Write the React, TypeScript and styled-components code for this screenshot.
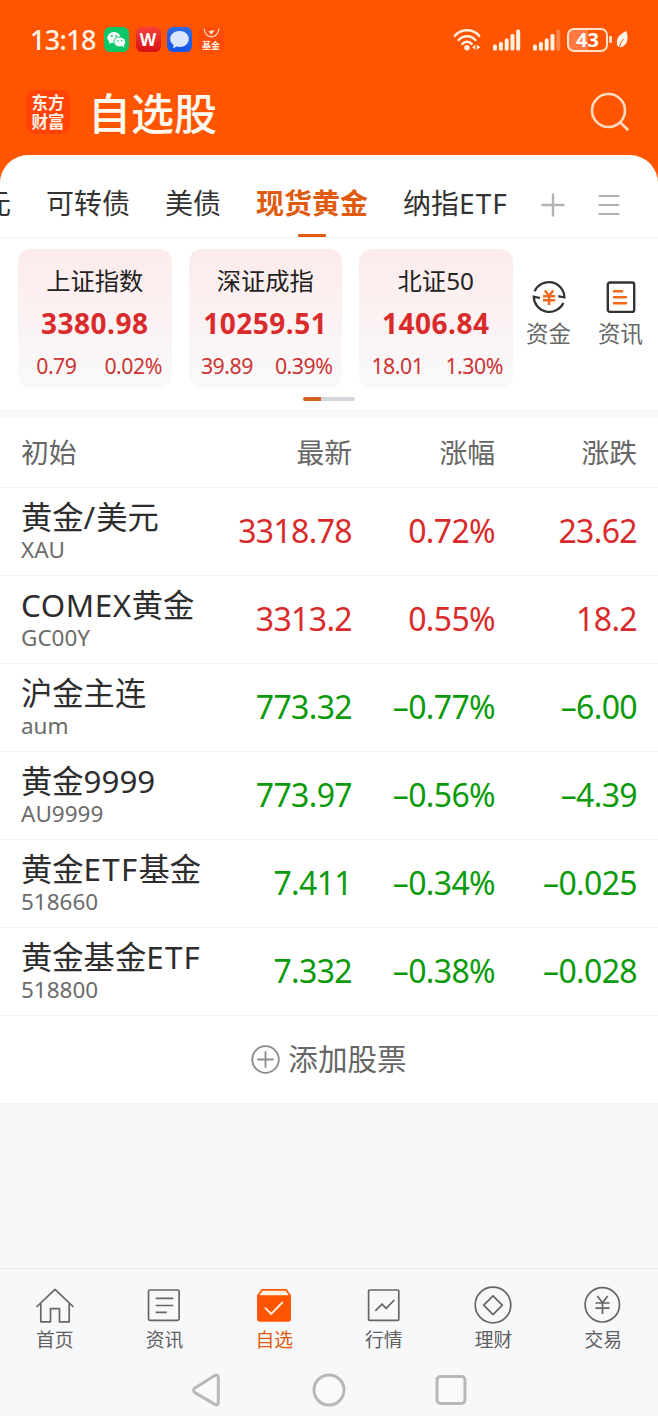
import React from 'react';
import styled, { createGlobalStyle } from 'styled-components';

const ORANGE = '#ff5500';
const ACCENT = '#e05a10';
const RED = '#d92b2b';
const GREEN = '#0a9a0a';

const GlobalStyle = createGlobalStyle`
  * { box-sizing: border-box; }
  body {
    margin: 0;
    background: #f7f8fa;
    font-family: "Noto Sans", "Noto Sans CJK SC", sans-serif;
  }
  svg { display: block; flex: none; }
`;

const Page = styled.div`
  display: flex;
  flex-direction: column;
  width: 658px;
  height: 1416px;
  overflow: hidden;
  background: ${ORANGE};
`;

/* ---------- status bar ---------- */
const StatusBar = styled.div`
  display: flex;
  align-items: center;
  height: 79px;
  flex: none;
  padding: 0 29px 0 30px;
  color: #fff6ea;
`;
const Clock = styled.div`
  width: 74px;
  font-size: 27px;
  font-weight: 500;
  line-height: 32px;
  letter-spacing: -0.7px;
`;
const AppBadges = styled.div`
  display: flex;
  gap: 6.5px;
`;
const AppBadge = styled.div<{ $bg: string }>`
  display: flex;
  flex-direction: column;
  align-items: center;
  justify-content: center;
  width: 25px;
  height: 25px;
  border-radius: 6px;
  overflow: hidden;
  background: ${(p) => p.$bg};
`;
const BadgeLetter = styled.span`
  font-size: 17px;
  line-height: 25px;
  font-weight: 700;
  color: #fff;
`;
const FundLabel = styled.span`
  font: 700 9px/11px "Noto Sans CJK SC", sans-serif;
  color: #fff0e0;
  white-space: nowrap;
`;
const StatusIcons = styled.div`
  display: flex;
  align-items: center;
  margin-left: auto;
`;
const Signal = styled.svg`
  margin-left: 11.5px;
`;
const Battery = styled.div`
  width: 41px;
  height: 24px;
  margin-left: 6.5px;
  border: 2px solid #ffe2cc;
  border-radius: 7px;
  background: linear-gradient(90deg, #ff7a42 0 50%, ${ORANGE} 50%);
  color: #fff;
  font-weight: 700;
  font-size: 20px;
  line-height: 20px;
  text-align: center;
`;
const BatteryNub = styled.div`
  width: 3px;
  height: 7px;
  margin: 0 4px 0 1px;
  border-radius: 1px;
  background: #ffd9bd;
`;

/* ---------- header ---------- */
const Header = styled.header`
  display: flex;
  align-items: center;
  height: 76px;
  flex: none;
  padding: 0 27px 10px 26px;
`;
const Logo = styled.div`
  width: 44px;
  height: 44px;
  padding-top: 3px;
  border-radius: 9px;
  background: #ff4306;
  color: #fff3e6;
  font: 700 16.5px/18.5px "Noto Sans CJK SC", sans-serif;
  text-align: center;
`;
const Title = styled.h1`
  flex: 1;
  margin: 4px 0 0 18px;
  color: #fffaf0;
  font-size: 43px;
  line-height: 50px;
  font-weight: 500;
`;

/* ---------- panel & tabs ---------- */
const Panel = styled.main`
  display: flex;
  flex-direction: column;
  flex: 1;
  overflow: hidden;
  border-radius: 28px 28px 0 0;
  background: #fff;
`;
const TabBar = styled.nav`
  display: flex;
  height: 83px;
  flex: none;
  border-bottom: 1px solid #f1f1f1;
`;
const Tabs = styled.div`
  display: flex;
  gap: 35px;
  width: 541px;
  margin-left: -17px;
  padding-right: 10px;
`;
const Tab = styled.div<{ $active?: boolean }>`
  display: flex;
  flex: none;
  flex-direction: column;
  align-items: center;
  height: 83px;
  padding-top: 31px;
  font-size: 28px;
  line-height: 34px;
  white-space: nowrap;
  font-weight: ${(p) => (p.$active ? 700 : 400)};
  color: ${(p) => (p.$active ? ACCENT : '#333')};

  &::after {
    content: "";
    display: ${(p) => (p.$active ? 'block' : 'none')};
    width: 28px;
    height: 3px;
    margin-top: 14px;
    border-radius: 1px;
    background: ${ACCENT};
  }
`;
const TabActions = styled.div`
  display: flex;
  align-items: center;
  gap: 33px;
  padding: 17px 0 0 17px;
`;

/* ---------- index cards ---------- */
const Indices = styled.section`
  display: flex;
  height: 150px;
  flex: none;
  padding: 11px 0 0 18px;
`;
const Cards = styled.div`
  display: grid;
  grid-template-columns: repeat(3, 153.5px);
  column-gap: 17px;
`;
const Card = styled.div`
  height: 139px;
  padding-top: 16px;
  border-radius: 13px;
  background: linear-gradient(#fdebeb, #f9f9fa);
  text-align: center;
`;
const CardName = styled.div`
  color: #222;
  font-size: 24.3px;
  line-height: 32px;
`;
const CardValue = styled.div`
  margin-top: 10px;
  color: ${RED};
  font-size: 28px;
  font-weight: 700;
  line-height: 32px;
  letter-spacing: 0.5px;
`;
const CardChange = styled.div`
  display: grid;
  grid-template-columns: 1fr 1fr;
  margin-top: 12px;
  color: #cc3434;
  font-size: 21.3px;
  line-height: 29px;
  letter-spacing: -0.5px;
`;
const Shortcut = styled.div`
  display: flex;
  flex-direction: column;
  align-items: center;
  width: 72px;
  padding-top: 30px;
  color: #666;
  font-size: 22.4px;
  line-height: 28px;
`;
const ShortcutLabel = styled.div`
  margin-top: 5px;
`;
const Pager = styled.div`
  width: 52px;
  height: 4px;
  flex: none;
  margin: 9px 0 8px 303px;
  border-radius: 2px;
  background: linear-gradient(90deg, #d2611f 0 18px, #d3d6da 18px);
`;
const Band = styled.div`
  height: 9px;
  flex: none;
  background: #f7f8fa;
`;

/* ---------- quotes ---------- */
const Row = styled.div<{ $head?: boolean }>`
  display: grid;
  grid-template-columns: 199px 132px 143px 142px;
  align-items: center;
  height: ${(p) => (p.$head ? 70 : 88)}px;
  flex: none;
  padding: 0 21px;
  border-bottom: 1px solid #f3f3f3;
`;
const HeadCell = styled.div<{ $left?: boolean }>`
  margin-bottom: 2px;
  color: #666;
  font-size: 27.8px;
  line-height: 36px;
  text-align: ${(p) => (p.$left ? 'left' : 'right')};
`;
const Name = styled.div`
  color: #2d2d2d;
  font-size: 31.3px;
  line-height: 36px;
  white-space: nowrap;
`;
const Latin = styled.span<{ $track?: number }>`
  letter-spacing: ${(p) => p.$track ?? 0}px;
`;
const Code = styled.div`
  color: #6b6b6b;
  font-size: 22.5px;
  line-height: 30px;
`;
const Num = styled.div<{ $up: boolean }>`
  margin-bottom: 1px;
  color: ${(p) => (p.$up ? RED : GREEN)};
  font-size: 32px;
  line-height: 40px;
  letter-spacing: -0.65px;
  text-align: right;
  white-space: nowrap;
`;
const AddRow = styled.div`
  display: flex;
  align-items: center;
  justify-content: center;
  gap: 8px;
  height: 88px;
  flex: none;
  border-bottom: 1px solid #f0f0f2;
  color: #666;
  font-size: 29.6px;
  line-height: 36px;
`;
const AddLabel = styled.span`
  margin-bottom: 2px;
`;
const Filler = styled.div`
  flex: 1;
  background: #f7f8fa;
`;

/* ---------- bottom bars ---------- */
const BottomNav = styled.nav`
  display: grid;
  grid-template-columns: repeat(6, 1fr);
  height: 96px;
  flex: none;
  border-top: 1px solid #ebecee;
  background: #f7f8fa;
`;
const NavItem = styled.div<{ $active?: boolean }>`
  display: flex;
  flex-direction: column;
  align-items: center;
  padding-top: 16px;
  color: ${(p) => (p.$active ? ACCENT : '#606060')};
  font-size: 18.8px;
  line-height: 24px;
`;
const NavLabel = styled.div`
  margin-top: 3px;
`;
const SystemNav = styled.div`
  display: flex;
  align-items: center;
  justify-content: space-between;
  height: 52px;
  flex: none;
  padding: 0 189px 0 188px;
  background: #f7f8fa;
`;

/* ---------- data ---------- */
const cards = [
  ['上证指数', '3380.98', '0.79', '0.02%'],
  ['深证成指', '10259.51', '39.89', '0.39%'],
  ['北证50', '1406.84', '18.01', '1.30%'],
];

const quotes: { name: React.ReactNode; code: string; values: string[]; up: boolean }[] = [
  { name: <>黄金<Latin $track={1}>/</Latin>美元</>, code: 'XAU', values: ['3318.78', '0.72%', '23.62'], up: true },
  { name: <><Latin $track={0.6}>COMEX</Latin>黄金</>, code: 'GC00Y', values: ['3313.2', '0.55%', '18.2'], up: true },
  { name: '沪金主连', code: 'aum', values: ['773.32', '–0.77%', '–6.00'], up: false },
  { name: '黄金9999', code: 'AU9999', values: ['773.97', '–0.56%', '–4.39'], up: false },
  { name: <>黄金<Latin $track={1.3}>ETF</Latin>基金</>, code: '518660', values: ['7.411', '–0.34%', '–0.025'], up: false },
  { name: <>黄金基金<Latin $track={1.3}>ETF</Latin></>, code: '518800', values: ['7.332', '–0.38%', '–0.028'], up: false },
];

/* ---------- icons ---------- */
const WeChatIcon = () => (
  <svg width="25" height="25" viewBox="0 0 25 25">
    <ellipse cx="10" cy="10.6" rx="6.6" ry="5.6" fill="#fff" />
    <path d="M5.6 14l-.7 3 3.2-1.6z" fill="#fff" />
    <ellipse cx="15.8" cy="15" rx="6" ry="5" fill="#fff" stroke="#0bc765" strokeWidth="1" />
    <path d="M18 19l2.3 1.6-.4-2.8z" fill="#fff" />
    <circle cx="7.8" cy="9" r="1" fill="#0bc765" />
    <circle cx="12.2" cy="9" r="1" fill="#0bc765" />
    <circle cx="14" cy="13.7" r=".8" fill="#0bc765" />
    <circle cx="17.8" cy="13.7" r=".8" fill="#0bc765" />
  </svg>
);
const ChatIcon = () => (
  <svg width="25" height="25" viewBox="0 0 25 25">
    <path d="M12.5 4c5.200 0 9.300 3.400 9.300 8s-4.100 8-9.300 8c-1 0-2-.1-2.900-.4-1 .8-2.300 1.300-4 1.300.8-.9 1.100-1.800 1-2.900C4.500 16.500 3.200 14.400 3.200 12c0-4.600 4.100-8 9.300-8z" fill="#dbe7ff" />
  </svg>
);
const FundIcon = () => (
  <svg width="25" height="12" viewBox="0 0 25 12" fill="none" stroke="#ffe3cf">
    <path d="M5 .5c.8 5.400 4 8.300 7.500 8.300S19.200 5.900 20 .5" strokeWidth="1.200" />
    <path d="M9.500 3.200l6-1.200-3 5z" fill="#ffe3cf" stroke="none" />
  </svg>
);
const WifiIcon = () => (
  <svg width="29" height="24" viewBox="0 0 29 24" fill="none" stroke="#fff0e0" strokeWidth="2.500" strokeLinecap="round">
    <path d="M1.800 7.800C8.500.5 19.500.5 26.200 7.800" />
    <path d="M5.600 12c4.800-5 12-5 16.800 0" />
    <path d="M9.300 15.900c2.900-2.600 6.500-2.600 9.400 0" />
    <circle cx="14" cy="19.800" r="2.700" fill="#fff0e0" stroke="none" />
    <path d="M22.300 16.800v5l-3.200-2.500zM23.700 16.800v5l3.700-2.500z" fill="#fff0e0" stroke="none" />
  </svg>
);
const SignalIcon = ({ weak }: { weak?: boolean }) => (
  <Signal width="28" height="23" viewBox="0 0 28 23" fill="#fff0e0">
    <rect x="0" y="16.500" width="4" height="6" rx="1.500" />
    <rect x="5.900" y="14" width="4" height="8.500" rx="1.500" />
    <rect x="11.700" y="10.500" width="4" height="12" rx="1.500" />
    <rect x="17.500" y="6" width="4" height="16.500" rx="1.500" />
    <rect x="23.200" y="1.500" width="4" height="21" rx="1.500" opacity={weak ? 0.3 : 1} />
  </Signal>
);
const LeafIcon = () => (
  <svg width="13" height="19" viewBox="0 0 13 19">
    <path d="M10.200 1C5 3.500 1 6.500 .8 12c0 2.500 .6 4 2 5.200C9 18.500 14.200 10 10.200 1z" fill="#fff6ea" />
    <path d="M3 18C4 14 5.500 11.500 7.500 9" stroke={ORANGE} strokeWidth="1" fill="none" />
  </svg>
);
const SearchIcon = () => (
  <svg width="42" height="42" viewBox="0 0 42 42" fill="none" stroke="#ffdcc0" strokeWidth="2.600">
    <circle cx="19.500" cy="19.500" r="16.500" />
    <path d="M31 31.200l8.300 8" />
  </svg>
);
const PlusIcon = () => (
  <svg width="24" height="24" viewBox="0 0 24 24" stroke="#b3b3b3" strokeWidth="2.400" strokeLinecap="round">
    <path d="M12 1.500v21M1.500 12h21" />
  </svg>
);
const MenuIcon = () => (
  <svg width="22" height="24" viewBox="0 0 22 24" stroke="#b0b0b0" strokeWidth="2.200" strokeLinecap="round">
    <path d="M1.500 3h19M1.500 12h19M1.500 21h19" />
  </svg>
);
const FundsIcon = () => (
  <svg width="36" height="36" viewBox="0 0 36 36" fill="none" stroke="#333" strokeWidth="2.200">
    <path d="M3.600 12.200A15.600 15.600 0 0 1 33.400 18.500L27.300 17.200" />
    <path d="M32.400 24A15.600 15.600 0 0 1 2.700 17.700L9 19" />
    <path d="M13.800 11.500l4.200 5.200 4.200-5.200M12 17.200h12.200M12 21.200h12.200M18.100 17v9" stroke="#f26a1b" strokeWidth="2.500" />
  </svg>
);
const NewsIcon = () => (
  <svg width="36" height="36" viewBox="0 0 36 36" fill="none" stroke="#333" strokeWidth="2.400">
    <rect x="4.800" y="3.500" width="26.400" height="29.400" rx="2.200" />
    <path d="M11 12.300h8M11 18.200h12M11 24.300h12" stroke="#f26a1b" strokeWidth="2.500" strokeLinecap="round" />
  </svg>
);
const AddIcon = () => (
  <svg width="29" height="29" viewBox="0 0 29 29" fill="none" stroke="#8c8c8c" strokeWidth="1.800">
    <circle cx="14.500" cy="14.500" r="13.300" />
    <path d="M14.500 6.300v16.400M6.300 14.500h16.400" />
  </svg>
);

const NavSvg = ({ children }: { children: React.ReactNode }) => (
  <svg width="40" height="40" viewBox="0 0 40 40" fill="none" stroke="#666" strokeWidth="1.700" strokeLinejoin="round">
    {children}
  </svg>
);

const navItems = [
  {
    label: '首页',
    icon: <path d="M1.500 22L20 4.300 38.500 22M5.800 18.500v18.300h9.700V23.700h9v13.100h9.700V18.500" />,
  },
  {
    label: '资讯',
    icon: (
      <>
        <rect x="4.500" y="5" width="30.600" height="30.300" rx="1.500" />
        <path d="M11.700 13.300h17.500M11.700 20.500h17.500M11.700 27.400h11" />
      </>
    ),
  },
  {
    label: '自选',
    active: true,
    icon: (
      <>
        <path d="M3.300 11.500L8 4.900h24.200l4.600 6.600" fill="#fff0e0" stroke={ORANGE} />
        <path d="M3 10.300h34v23.400a3 3 0 0 1-3 3H6a3 3 0 0 1-3-3z" fill={ORANGE} stroke="none" />
        <path d="M11 22.700l6.200 6.300 11.600-12" stroke="#fff0e0" strokeWidth="1.800" />
      </>
    ),
  },
  {
    label: '行情',
    icon: (
      <>
        <rect x="4.600" y="5" width="30.200" height="30.300" rx="1" />
        <path d="M11.300 25.800l6.700-6.700 4.200 4.200 8.100-8.300" />
      </>
    ),
  },
  {
    label: '理财',
    icon: (
      <>
        <circle cx="20" cy="20" r="17.800" />
        <path d="M20 10.800l9.300 9.400-9.300 9.400-9.300-9.400z" />
      </>
    ),
  },
  {
    label: '交易',
    icon: (
      <>
        <circle cx="19.300" cy="19.800" r="17.200" />
        <path d="M14.300 11l5.200 6.800 5.200-6.800M12.500 18h14M12.500 23.200h14M19.500 18v11" />
      </>
    ),
  },
];

export default function App() {
  return (
    <Page>
      <GlobalStyle />
      <StatusBar>
        <Clock>13:18</Clock>
        <AppBadges>
          <AppBadge $bg="#0bc765"><WeChatIcon /></AppBadge>
          <AppBadge $bg="linear-gradient(#f5403a, #d90f16)"><BadgeLetter>W</BadgeLetter></AppBadge>
          <AppBadge $bg="linear-gradient(#2f6be0, #1257e8)"><ChatIcon /></AppBadge>
          <AppBadge $bg="#ff4b0a"><FundIcon /><FundLabel>基金</FundLabel></AppBadge>
        </AppBadges>
        <StatusIcons>
          <WifiIcon />
          <SignalIcon />
          <SignalIcon weak />
          <Battery>43</Battery>
          <BatteryNub />
          <LeafIcon />
        </StatusIcons>
      </StatusBar>

      <Header>
        <Logo>东方<br />财富</Logo>
        <Title>自选股</Title>
        <SearchIcon />
      </Header>

      <Panel>
        <TabBar>
          <Tabs>
            <Tab>元</Tab>
            <Tab>可转债</Tab>
            <Tab>美债</Tab>
            <Tab $active>现货黄金</Tab>
            <Tab><span>纳指<Latin $track={1}>ETF</Latin></span></Tab>
          </Tabs>
          <TabActions>
            <PlusIcon />
            <MenuIcon />
          </TabActions>
        </TabBar>

        <Indices>
          <Cards>
            {cards.map(([name, value, diff, pct]) => (
              <Card key={name}>
                <CardName>{name}</CardName>
                <CardValue>{value}</CardValue>
                <CardChange>
                  <span>{diff}</span>
                  <span>{pct}</span>
                </CardChange>
              </Card>
            ))}
          </Cards>
          <Shortcut><FundsIcon /><ShortcutLabel>资金</ShortcutLabel></Shortcut>
          <Shortcut><NewsIcon /><ShortcutLabel>资讯</ShortcutLabel></Shortcut>
        </Indices>
        <Pager />
        <Band />

        <Row $head>
          <HeadCell $left>初始</HeadCell>
          <HeadCell>最新</HeadCell>
          <HeadCell>涨幅</HeadCell>
          <HeadCell>涨跌</HeadCell>
        </Row>
        {quotes.map((q) => (
          <Row key={q.code}>
            <div>
              <Name>{q.name}</Name>
              <Code>{q.code}</Code>
            </div>
            {q.values.map((v) => (
              <Num key={v} $up={q.up}>{v}</Num>
            ))}
          </Row>
        ))}
        <AddRow><AddIcon /><AddLabel>添加股票</AddLabel></AddRow>
        <Filler />

        <BottomNav>
          {navItems.map((item) => (
            <NavItem key={item.label} $active={item.active}>
              <NavSvg>{item.icon}</NavSvg>
              <NavLabel>{item.label}</NavLabel>
            </NavItem>
          ))}
        </BottomNav>
        <SystemNav>
          <svg width="36" height="36" viewBox="0 0 36 36" fill="#fafafa" stroke="#b8b8b8" strokeWidth="3" strokeLinejoin="round">
            <path d="M26.800 3.600c2-1.200 3.500-.3 3.500 2v24.800c0 2.300-1.500 3.200-3.500 2L7 20.600c-2-1.200-2-3.300 0-4.600z" />
          </svg>
          <svg width="36" height="36" viewBox="0 0 36 36" fill="#fafafa" stroke="#b8b8b8" strokeWidth="3">
            <circle cx="18" cy="18" r="15" />
          </svg>
          <svg width="36" height="36" viewBox="0 0 36 36" fill="#fafafa" stroke="#b8b8b8" strokeWidth="3">
            <rect x="4" y="4.500" width="28" height="27" rx="3.500" />
          </svg>
        </SystemNav>
      </Panel>
    </Page>
  );
}
